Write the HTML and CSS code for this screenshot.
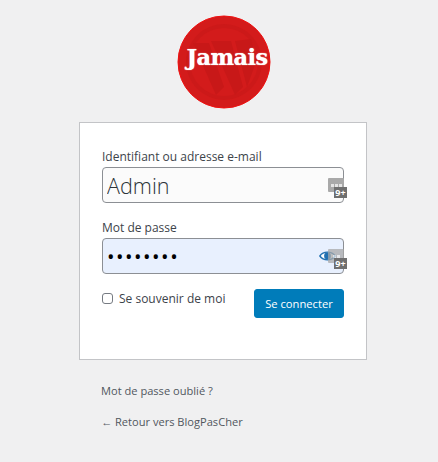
FILE: index.html
```html
<!DOCTYPE html>
<html lang="fr">
<head>
    <meta charset="UTF-8">
    <meta name="viewport" content="width=device-width, initial-scale=1.0">
    <title>Se connecter</title>
    <link rel="stylesheet" href="styles.css">
</head>

<body>
    <div class="login">
        <div class="logo">
            <svg class="logo-mark" viewBox="0 0 94 94">
                <circle cx="47" cy="47" r="46" fill="#d31b1b" stroke="#f01010" stroke-width="1"/>
                <circle cx="47" cy="47" r="38" fill="#cc1919"/>
                <circle cx="47" cy="47" r="34" fill="#d31b1b"/>
                <path d="M16 28 L32 28 L47 72 L39 80 Z M34 26 L54 26 L66 72 L58 80 Z M58 26 L74 24 L80 44 L70 72 Z" fill="#c81818"/>
            </svg>
            <span class="logo-text">Jamais</span>
        </div>

        <form class="card">
            <label class="field-label" for="user">Identifiant ou adresse e-mail</label>
            <div class="field">
                <input class="input input-user" id="user" type="text" value="Admin">
                <span class="manager"><i></i><i></i><i></i></span>
                <span class="badge">9+</span>
            </div>

            <label class="field-label" for="pass">Mot de passe</label>
            <div class="field field-pass">
                <input class="input input-pass" id="pass" type="password" value="password">
                <svg class="eye" viewBox="0 0 20 14">
                    <path d="M1 7 C5 1 15 1 19 7 C15 13 5 13 1 7 Z" fill="#fff" stroke="#2271b1" stroke-width="1.6"/>
                    <circle cx="10" cy="7" r="4" fill="#2271b1"/>
                </svg>
                <span class="manager manager-over"><i></i><i></i></span>
                <span class="badge">9+</span>
            </div>

            <div class="actions">
                <label class="remember">
                    <input class="check" type="checkbox">
                    Se souvenir de moi
                </label>
                <button class="submit" type="button">Se connecter</button>
            </div>
        </form>

        <div class="links">
            <p class="nav"><a href="#">Mot de passe oublié ?</a></p>
            <p class="nav"><a href="#">← Retour vers BlogPasCher</a></p>
        </div>
    </div>
</body>
</html>
```

FILE: styles.css
```css
* {
    box-sizing: border-box;
}

body {
    margin: 0;
    background: #f0f0f1;
    color: #3c434a;
    font-family: "Open Sans", "Noto Sans", sans-serif;
    font-size: 12px;
}

.login {
    width: 288px;
    margin-left: 79px;
    padding-top: 15px;
}

.logo {
    position: relative;
    width: 94px;
    height: 94px;
    margin: 0 0 13px 98px;
}

.logo-mark {
    display: block;
    width: 94px;
    height: 94px;
}

.logo-text {
    position: absolute;
    top: 29px;
    left: 3px;
    width: 94px;
    text-align: center;
    color: #fff;
    font-family: "DejaVu Serif", serif;
    font-weight: bold;
    font-size: 22.3px;
    letter-spacing: -0.5px;
    text-shadow: 0 0 1px #fff;
}

.card {
    height: 238px;
    padding: 26px 22px 0;
    background: #fff;
    border: 1px solid #c3c4c7;
}

.field-label {
    display: block;
    height: 18px;
    font-size: 12px;
    line-height: 16px;
}

.field {
    position: relative;
    height: 36px;
    margin-bottom: 17px;
}

.field-pass {
    margin-bottom: 15px;
}

.input {
    display: block;
    width: 100%;
    height: 36px;
    padding: 0 4px;
    border: 1px solid #8c8f94;
    border-radius: 4px;
    color: #2c3338;
    font-family: inherit;
    font-size: 21.6px;
    font-weight: 300;
}

.input-user {
    background: #fbfbfb;
}

.input-pass {
    background: #e8f0fe;
    color: #000;
    font-size: 20px;
    font-weight: 400;
    letter-spacing: 1.5px;
}

.manager {
    position: absolute;
    top: 11px;
    right: 0;
    width: 16px;
    height: 14px;
    padding-top: 6px;
    display: flex;
    justify-content: center;
    gap: 1px;
    background: #a9a9a9;
    border-radius: 1px;
}

.manager i {
    width: 3px;
    height: 3px;
    background: #e4e4e4;
}

.manager-over {
    opacity: 0.75;
}

.badge {
    position: absolute;
    top: 20px;
    right: -3px;
    width: 13px;
    height: 11px;
    background: #6f6f6f;
    color: #fff;
    font-size: 9px;
    font-weight: bold;
    line-height: 11px;
    text-align: center;
}

.eye {
    position: absolute;
    top: 12px;
    right: 8px;
    width: 17px;
    height: 12px;
}

.actions {
    display: flex;
    justify-content: space-between;
    align-items: flex-start;
}

.remember {
    display: flex;
    align-items: center;
    gap: 6px;
    height: 18px;
}

.check {
    appearance: none;
    width: 11px;
    height: 11px;
    margin: 0;
    background: #fff;
    border: 1px solid #767b82;
    border-radius: 3px;
}

.submit {
    width: 90px;
    height: 29px;
    background: #007cba;
    border: 1px solid #007cba;
    border-radius: 3px;
    color: #fff;
    font-family: inherit;
    font-size: 11.2px;
}

.links {
    padding-top: 8px;
}

.nav {
    margin: 0 0 0 22px;
    padding-top: 15px;
    line-height: 16px;
    font-size: 11.1px;
}

.nav a {
    color: #50575e;
    text-decoration: none;
}
```
